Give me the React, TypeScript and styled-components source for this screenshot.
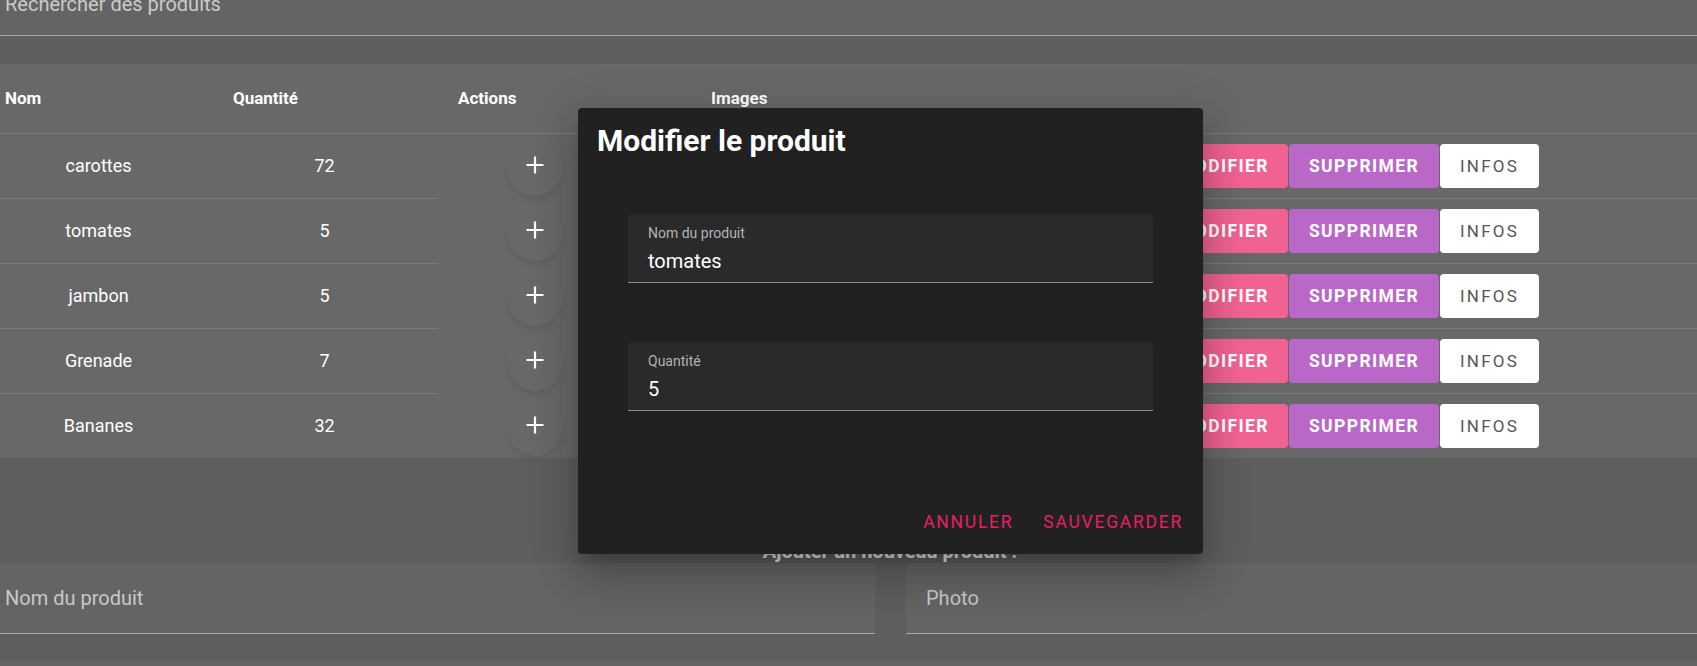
import React from "react";
import styled, { createGlobalStyle } from "styled-components";

const GlobalStyle = createGlobalStyle`
  html, body { margin: 0; padding: 0; }
  body {
    background: #5e5e5e;
    font-family: Roboto, "Noto Sans", "Liberation Sans", sans-serif;
    overflow: hidden;
  }
`;

const Page = styled.div`
  position: relative;
  width: 1697px;
  height: 666px;
  overflow: hidden;
  background: #5e5e5e;
`;

const SearchField = styled.div`
  box-sizing: border-box;
  height: 36px;
  background: #646464;
  border-bottom: 1px solid #a9a9a9;
  padding-left: 5px;
  overflow: hidden;
`;

const SearchLabel = styled.div`
  margin-top: -6px;
  font-size: 20px;
  line-height: 20px;
  color: #cacaca;
`;

const Table = styled.div`
  margin-top: 28px;
  background: #686868;
`;

const HeaderRow = styled.div`
  box-sizing: border-box;
  display: grid;
  grid-template-columns: 228px 225px 253px 1fr;
  align-items: center;
  height: 70px;
  padding-bottom: 1px;
  border-bottom: 1px solid #7b7b7b;
`;

const HeaderCell = styled.div`
  padding-left: 5px;
  font-size: 17px;
  font-weight: 700;
  color: #ffffff;
`;

const Row = styled.div`
  display: grid;
  grid-template-columns: 197px 241px 194px 527px auto 1fr;
  height: 65px;

  &:last-child {
    height: 64px;
  }
  &:last-child > * {
    border-bottom-color: transparent;
  }
`;

const Cell = styled.div<{ $line?: boolean; $shift?: number }>`
  box-sizing: border-box;
  display: flex;
  align-items: center;
  justify-content: center;
  padding-left: ${(p) => p.$shift ?? 0}px;
  padding-bottom: 2px;
  border-bottom: 1px solid ${(p) => (p.$line === false ? "transparent" : "#7b7b7b")};
  font-size: 18px;
  color: #ffffff;
`;

const ButtonCell = styled(Cell)`
  justify-content: flex-start;
  padding-bottom: 0;
  gap: 1px;
`;

const Fab = styled.div`
  width: 56px;
  height: 56px;
  border-radius: 50%;
  display: flex;
  align-items: center;
  justify-content: center;
  margin-top: 6px;
  box-shadow: 0 3px 4px -1px rgba(0, 0, 0, 0.06), 0 5px 8px 0 rgba(0, 0, 0, 0.035);
  svg { margin-top: -6px; }
`;

type Variant = "pink" | "purple" | "white";

const ActionButton = styled.button<{ $variant: Variant; $w: number }>`
  box-sizing: border-box;
  width: ${(p) => p.$w}px;
  height: 44px;
  border: none;
  border-radius: 4px;
  padding: 0;
  font-family: Roboto, "Noto Sans", sans-serif;
  font-size: ${(p) => (p.$variant === "white" ? 17 : 17.5)}px;
  font-weight: ${(p) => (p.$variant === "white" ? 400 : 700)};
  letter-spacing: ${(p) => (p.$variant === "white" ? "0.13em" : "0.08em")};
  text-transform: uppercase;
  background: ${(p) =>
    p.$variant === "pink" ? "#f06292" : p.$variant === "purple" ? "#ba68c8" : "#ffffff"};
  color: ${(p) => (p.$variant === "white" ? "#555555" : "#ffffff")};
`;

const AddSection = styled.div`
  box-sizing: border-box;
  height: 105px;
  padding-top: 83px;
  padding-left: 83px;
  text-align: center;
`;

const AddTitle = styled.div`
  font-size: 20px;
  line-height: 20px;
  font-weight: 700;
  color: #e6e6e6;
`;

const FieldRow = styled.div`
  display: grid;
  grid-template-columns: 875px 1fr;
  column-gap: 31px;
`;

const PageField = styled.div<{ $pad: number }>`
  box-sizing: border-box;
  height: 71px;
  display: flex;
  align-items: center;
  padding-left: ${(p) => p.$pad}px;
  background: #646464;
  border-bottom: 1px solid #a9a9a9;
  font-size: 20px;
  color: #c8c8c8;
`;

const BottomStrip = styled.div`
  margin-top: 27px;
  height: 10px;
  background: #646464;
`;

const Dialog = styled.div`
  position: absolute;
  left: 578px;
  top: 108px;
  width: 625px;
  height: 446px;
  box-sizing: border-box;
  background: #212121;
  border-radius: 4px;
  display: flex;
  flex-direction: column;
  box-shadow: 0 11px 15px -7px rgba(0, 0, 0, 0.2), 0 24px 38px 3px rgba(0, 0, 0, 0.14),
    0 9px 46px 8px rgba(0, 0, 0, 0.12);
`;

const DialogTitle = styled.div`
  padding: 16px 19px 0;
  font-size: 30px;
  line-height: 34px;
  font-weight: 700;
  color: #ffffff;
`;

const DialogBody = styled.div`
  padding: 56px 50px 0;
  display: flex;
  flex-direction: column;
  gap: 59px;
`;

const DialogField = styled.div`
  box-sizing: border-box;
  height: 69px;
  padding: 11px 20px 0;
  background: #2a2a2a;
  border-radius: 4px 4px 0 0;
  border-bottom: 1px solid #8c8c8c;
`;

const FieldLabel = styled.div`
  font-size: 14px;
  line-height: 17px;
  color: #b3b3b3;
`;

const FieldValue = styled.div`
  margin-top: 6px;
  font-size: 20px;
  line-height: 26px;
  color: #ffffff;
`;

const DialogActions = styled.div`
  margin-top: auto;
  display: flex;
  justify-content: flex-end;
  gap: 14px;
  padding: 0 12px 14px;
`;

const TextButton = styled.button`
  height: 36px;
  padding: 0 8px;
  border: none;
  background: transparent;
  font-family: Roboto, "Noto Sans", sans-serif;
  font-size: 17.5px;
  font-weight: 400;
  letter-spacing: 0.1em;
  text-transform: uppercase;
  color: #e91e63;
`;

const PlusIcon = () => (
  <svg width="20" height="20" viewBox="0 0 20 20">
    <path d="M10 1.5v17M1.5 10h17" stroke="#ffffff" strokeWidth="2.2" fill="none" />
  </svg>
);

const products = [
  { name: "carottes", qty: 72 },
  { name: "tomates", qty: 5 },
  { name: "jambon", qty: 5 },
  { name: "Grenade", qty: 7 },
  { name: "Bananes", qty: 32 },
];

export default function App() {
  return (
    <Page>
      <GlobalStyle />
      <SearchField>
        <SearchLabel>Rechercher des produits</SearchLabel>
      </SearchField>

      <Table>
        <HeaderRow>
          <HeaderCell>Nom</HeaderCell>
          <HeaderCell>Quantité</HeaderCell>
          <HeaderCell>Actions</HeaderCell>
          <HeaderCell>Images</HeaderCell>
        </HeaderRow>
        {products.map((p) => (
          <Row key={p.name}>
            <Cell>{p.name}</Cell>
            <Cell $shift={14}>{p.qty}</Cell>
            <Cell $line={false}>
              <Fab>
                <PlusIcon />
              </Fab>
            </Cell>
            <Cell />
            <ButtonCell>
              <ActionButton $variant="pink" $w={129}>Modifier</ActionButton>
              <ActionButton $variant="purple" $w={150}>Supprimer</ActionButton>
              <ActionButton $variant="white" $w={99}>Infos</ActionButton>
            </ButtonCell>
            <Cell />
          </Row>
        ))}
      </Table>

      <AddSection>
        <AddTitle>Ajouter un nouveau produit :</AddTitle>
      </AddSection>

      <FieldRow>
        <PageField $pad={5}>Nom du produit</PageField>
        <PageField $pad={20}>Photo</PageField>
      </FieldRow>
      <BottomStrip />

      <Dialog>
        <DialogTitle>Modifier le produit</DialogTitle>
        <DialogBody>
          <DialogField>
            <FieldLabel>Nom du produit</FieldLabel>
            <FieldValue>tomates</FieldValue>
          </DialogField>
          <DialogField>
            <FieldLabel>Quantité</FieldLabel>
            <FieldValue>5</FieldValue>
          </DialogField>
        </DialogBody>
        <DialogActions>
          <TextButton>Annuler</TextButton>
          <TextButton>Sauvegarder</TextButton>
        </DialogActions>
      </Dialog>
    </Page>
  );
}
